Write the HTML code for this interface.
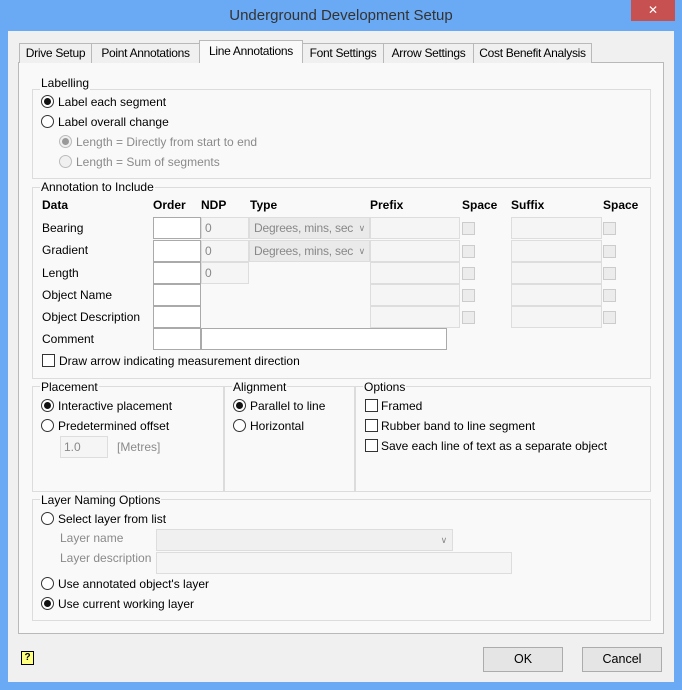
<!DOCTYPE html>
<html><head><meta charset="utf-8"><style>
*{box-sizing:border-box;margin:0;padding:0}
body{width:682px;height:690px;overflow:hidden;background:#6aa9f3;font-family:"Liberation Sans",sans-serif;font-size:12px;color:#000;position:relative}
.a{position:absolute;white-space:nowrap}
.t{position:absolute;line-height:14px;white-space:nowrap}
.g{color:#8a8a8a}
.client{position:absolute;left:8px;top:31px;width:666px;height:651px;background:#f0f0f0}
.panel{position:absolute;left:18px;top:62px;width:646px;height:572px;background:#f9f9f9;border:1px solid #b9b9b9}
.tab{position:absolute;top:43px;height:20px;background:#f0f0f0;border:1px solid #b9b9b9;border-bottom:none;line-height:18px;text-align:center;font-size:12px;letter-spacing:-0.3px;white-space:nowrap;overflow:hidden}
.grp{position:absolute;border:1px solid #dcdcdc}
.gl{position:absolute;background:#f9f9f9;padding:0 1px;line-height:14px}
.r{position:absolute;width:13px;height:13px;border:1px solid #333;border-radius:50%;background:#fff}
.r.on::after{content:"";position:absolute;left:2px;top:2px;width:7px;height:7px;border-radius:50%;background:#111}
.r.dis{border-color:#bbb;background:#f0f0f0}
.r.dis.on::after{background:#999}
.c{position:absolute;width:13px;height:13px;border:1px solid #333;background:#fff}
.c.dis{border-color:#ccc;background:#ececec}
.in{position:absolute;height:22px;border:1px solid #aaa;background:#fff}
.in.dis{border-color:#ddd;background:#f5f5f5;color:#888;padding-left:3px;line-height:20px}
.cb{position:absolute;height:22px;border:1px solid #ddd;background:#eaeaea;color:#888;padding-left:4px;line-height:20px;letter-spacing:-0.2px}
.btn{position:absolute;top:647px;width:80px;height:25px;border:1px solid #acacac;background:#e5e5e5;text-align:center;line-height:23px;font-size:12.5px}
b{font-weight:bold}
</style></head><body>
<div class="a" style="left:0;top:0;width:682px;height:31px;text-align:center;line-height:32px;font-size:15px;color:#333">Underground Development Setup</div>
<div class="a" style="left:631px;top:0;width:44px;height:21px;background:#c75050;color:#fff;text-align:center;line-height:20px;font-size:12px">✕</div>
<div class="client"></div>
<div class="panel"></div>
<div class="tab" style="left:19px;width:73px">Drive Setup</div>
<div class="tab" style="left:91px;width:109px">Point Annotations</div>
<div class="tab" style="left:199px;width:104px;top:40px;height:23px;background:#f9f9f9;line-height:20px">Line Annotations</div>
<div class="tab" style="left:302px;width:82px">Font Settings</div>
<div class="tab" style="left:383px;width:91px">Arrow Settings</div>
<div class="tab" style="left:473px;width:119px">Cost Benefit Analysis</div>

<div class="grp" style="left:32px;top:89px;width:619px;height:90px"></div>
<div class="gl" style="left:40px;top:76px">Labelling</div>
<div class="r on" style="left:41px;top:95px"></div><div class="t" style="left:58px;top:95px">Label each segment</div>
<div class="r" style="left:41px;top:115px"></div><div class="t" style="left:58px;top:115px">Label overall change</div>
<div class="r dis on" style="left:59px;top:135px"></div><div class="t g" style="left:76px;top:135px">Length = Directly from start to end</div>
<div class="r dis" style="left:59px;top:155px"></div><div class="t g" style="left:76px;top:155px">Length = Sum of segments</div>

<div class="grp" style="left:32px;top:187px;width:619px;height:192px"></div>
<div class="gl" style="left:40px;top:180px">Annotation to Include</div>
<div class="t" style="left:42px;top:198px"><b>Data</b></div>
<div class="t" style="left:153px;top:198px"><b>Order</b></div>
<div class="t" style="left:201px;top:198px"><b>NDP</b></div>
<div class="t" style="left:250px;top:198px"><b>Type</b></div>
<div class="t" style="left:370px;top:198px"><b>Prefix</b></div>
<div class="t" style="left:462px;top:198px"><b>Space</b></div>
<div class="t" style="left:511px;top:198px"><b>Suffix</b></div>
<div class="t" style="left:603px;top:198px"><b>Space</b></div>

<div class="t" style="left:42px;top:221px">Bearing</div>
<div class="t" style="left:42px;top:243px">Gradient</div>
<div class="t" style="left:42px;top:266px">Length</div>
<div class="t" style="left:42px;top:288px">Object Name</div>
<div class="t" style="left:42px;top:310px">Object Description</div>
<div class="t" style="left:42px;top:332px">Comment</div>

<div class="in" style="left:153px;top:217px;width:48px"></div>
<div class="in" style="left:153px;top:240px;width:48px"></div>
<div class="in" style="left:153px;top:262px;width:48px"></div>
<div class="in" style="left:153px;top:284px;width:48px"></div>
<div class="in" style="left:153px;top:306px;width:48px"></div>
<div class="in" style="left:153px;top:328px;width:48px"></div>
<div class="in" style="left:201px;top:328px;width:246px"></div>

<div class="in dis" style="left:201px;top:217px;width:48px">0</div>
<div class="in dis" style="left:201px;top:240px;width:48px">0</div>
<div class="in dis" style="left:201px;top:262px;width:48px">0</div>
<div class="cb" style="left:249px;top:217px;width:121px">Degrees, mins, sec <span style="position:absolute;right:4px;font-size:9px">∨</span></div>
<div class="cb" style="left:249px;top:240px;width:121px">Degrees, mins, sec <span style="position:absolute;right:4px;font-size:9px">∨</span></div>

<div class="in dis" style="left:370px;top:217px;width:90px"></div>
<div class="in dis" style="left:370px;top:240px;width:90px"></div>
<div class="in dis" style="left:370px;top:262px;width:90px"></div>
<div class="in dis" style="left:370px;top:284px;width:90px"></div>
<div class="in dis" style="left:370px;top:306px;width:90px"></div>
<div class="in dis" style="left:511px;top:217px;width:91px"></div>
<div class="in dis" style="left:511px;top:240px;width:91px"></div>
<div class="in dis" style="left:511px;top:262px;width:91px"></div>
<div class="in dis" style="left:511px;top:284px;width:91px"></div>
<div class="in dis" style="left:511px;top:306px;width:91px"></div>

<div class="c dis" style="left:462px;top:222px"></div><div class="c dis" style="left:603px;top:222px"></div>
<div class="c dis" style="left:462px;top:245px"></div><div class="c dis" style="left:603px;top:245px"></div>
<div class="c dis" style="left:462px;top:267px"></div><div class="c dis" style="left:603px;top:267px"></div>
<div class="c dis" style="left:462px;top:289px"></div><div class="c dis" style="left:603px;top:289px"></div>
<div class="c dis" style="left:462px;top:311px"></div><div class="c dis" style="left:603px;top:311px"></div>

<div class="c" style="left:42px;top:354px"></div><div class="t" style="left:59px;top:354px">Draw arrow indicating measurement direction</div>

<div class="grp" style="left:32px;top:386px;width:192px;height:106px"></div>
<div class="gl" style="left:40px;top:380px">Placement</div>
<div class="grp" style="left:224px;top:386px;width:131px;height:106px"></div>
<div class="gl" style="left:232px;top:380px">Alignment</div>
<div class="grp" style="left:355px;top:386px;width:296px;height:106px"></div>
<div class="gl" style="left:363px;top:380px">Options</div>
<div class="r on" style="left:41px;top:399px"></div><div class="t" style="left:58px;top:399px">Interactive placement</div>
<div class="r" style="left:41px;top:419px"></div><div class="t" style="left:58px;top:419px">Predetermined offset</div>
<div class="in dis" style="left:60px;top:436px;width:48px;height:22px">1.0</div>
<div class="t g" style="left:117px;top:440px">[Metres]</div>
<div class="r on" style="left:233px;top:399px"></div><div class="t" style="left:250px;top:399px">Parallel to line</div>
<div class="r" style="left:233px;top:419px"></div><div class="t" style="left:250px;top:419px">Horizontal</div>
<div class="c" style="left:365px;top:399px"></div><div class="t" style="left:381px;top:399px">Framed</div>
<div class="c" style="left:365px;top:419px"></div><div class="t" style="left:381px;top:419px">Rubber band to line segment</div>
<div class="c" style="left:365px;top:439px"></div><div class="t" style="left:381px;top:439px">Save each line of text as a separate object</div>

<div class="grp" style="left:32px;top:499px;width:619px;height:122px"></div>
<div class="gl" style="left:40px;top:493px">Layer Naming Options</div>
<div class="r" style="left:41px;top:512px"></div><div class="t" style="left:58px;top:512px">Select layer from list</div>
<div class="t g" style="left:60px;top:531px">Layer name</div>
<div class="cb" style="left:156px;top:529px;width:297px;background:#f0f0f0"><span style="position:absolute;right:5px;font-size:9px">∨</span></div>
<div class="t g" style="left:60px;top:551px">Layer description</div>
<div class="in dis" style="left:156px;top:552px;width:356px"></div>
<div class="r" style="left:41px;top:577px"></div><div class="t" style="left:58px;top:577px">Use annotated object's layer</div>
<div class="r on" style="left:41px;top:597px"></div><div class="t" style="left:58px;top:597px">Use current working layer</div>

<div class="a" style="left:21px;top:651px;width:13px;height:14px;border:1px solid #000;background:#ffff80;font-size:10px;font-weight:bold;text-align:center;line-height:12px">?</div>
<div class="btn" style="left:483px">OK</div>
<div class="btn" style="left:582px">Cancel</div>
</body></html>
